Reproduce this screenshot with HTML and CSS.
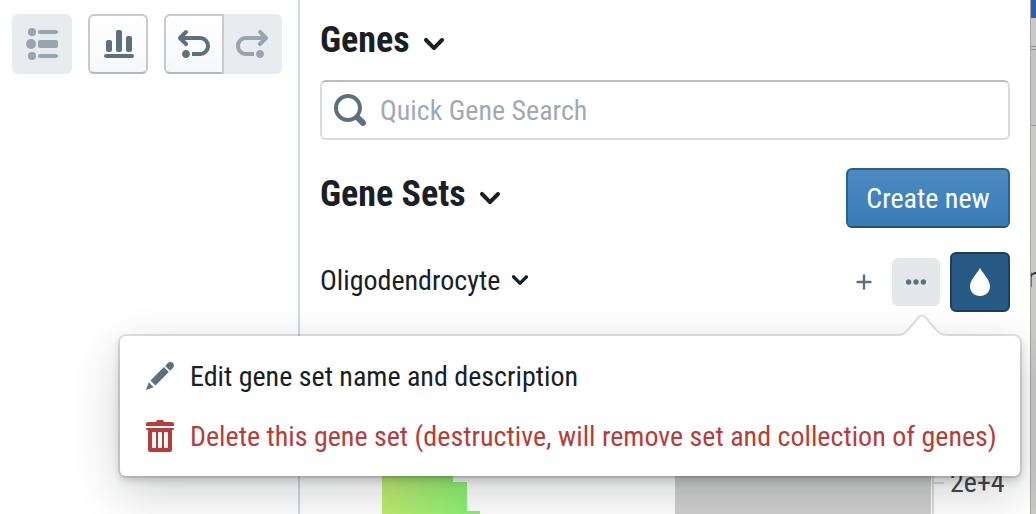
FILE: index.html
```html
<!DOCTYPE html>
<html lang="en">
<head>
<meta charset="utf-8">
<title>Gene Sets</title>
<link rel="stylesheet" href="styles.css">
</head>
<body>
<div class="app">
  <div class="toolbar">
    <button class="tool tool-disabled" aria-label="Legend" disabled>
      <svg class="icon" viewBox="0 0 16 16"><circle cx="3" cy="2" r="2"/><circle cx="2.5" cy="8" r="2.5"/><circle cx="3" cy="14" r="2"/><rect x="6" y="1" width="10" height="2" rx="1"/><rect x="6" y="6" width="10" height="4" rx="1"/><rect x="6" y="13" width="10" height="2" rx="1"/></svg>
    </button>
    <button class="tool" aria-label="Chart">
      <svg class="icon" viewBox="0 0 16 16"><rect x="2" y="6" width="3" height="6" rx="1"/><rect x="7" y="1" width="3" height="11" rx="1"/><rect x="12" y="4" width="3" height="8" rx="1"/><rect x="1" y="13" width="15" height="2" rx="1"/></svg>
    </button>
    <div class="tool-group">
      <button class="tool tool-first" aria-label="Undo">
        <svg class="icon" viewBox="0 0 16 16"><path d="M4 11c-1.1 0-2 .9-2 2s.9 2 2 2 2-.9 2-2-.9-2-2-2zm7-7H3.41L4.7 2.71c.19-.18.3-.43.3-.71a1.003 1.003 0 00-1.71-.71l-3 3C.11 4.47 0 4.72 0 5c0 .28.11.53.29.71l3 3a1.003 1.003 0 001.42-1.42L3.41 6H11c1.66 0 3 1.34 3 3s-1.34 3-3 3H7v2h4c2.76 0 5-2.24 5-5s-2.24-5-5-5z"/></svg>
      </button>
      <button class="tool tool-disabled tool-last" aria-label="Redo" disabled>
        <svg class="icon" viewBox="0 0 16 16"><path transform="matrix(-1 0 0 1 16 0)" d="M4 11c-1.1 0-2 .9-2 2s.9 2 2 2 2-.9 2-2-.9-2-2-2zm7-7H3.41L4.7 2.71c.19-.18.3-.43.3-.71a1.003 1.003 0 00-1.71-.71l-3 3C.11 4.47 0 4.72 0 5c0 .28.11.53.29.71l3 3a1.003 1.003 0 001.42-1.42L3.41 6H11c1.66 0 3 1.34 3 3s-1.34 3-3 3H7v2h4c2.76 0 5-2.24 5-5s-2.24-5-5-5z"/></svg>
      </button>
    </div>
  </div>

  <main class="panel">
    <h2 class="heading">
      <button class="toggle">Genes <svg class="icon" viewBox="0 0 16 16"><path d="M12 5c-.28 0-.53.11-.71.29L8 8.59l-3.29-3.3a1.003 1.003 0 00-1.42 1.42l4 4c.18.18.43.29.71.29s.53-.11.71-.29l4-4A1.003 1.003 0 0012 5z"/></svg></button>
    </h2>
    <label class="search">
      <svg class="icon" viewBox="0 0 16 16"><path d="M15.55 13.43l-2.67-2.68a6.94 6.94 0 001.11-3.76c0-3.87-3.13-7-7-7s-7 3.13-7 7 3.13 7 7 7c1.39 0 2.68-.42 3.76-1.11l2.68 2.67a1.498 1.498 0 102.12-2.12zm-8.56-1.44c-2.76 0-5-2.24-5-5s2.24-5 5-5 5 2.24 5 5-2.24 5-5 5z"/></svg>
      <input class="search-input" type="text" placeholder="Quick Gene Search" aria-label="Quick Gene Search">
    </label>

    <div class="row sets-row">
      <h2 class="heading">
        <button class="toggle">Gene Sets <svg class="icon" viewBox="0 0 16 16"><path d="M12 5c-.28 0-.53.11-.71.29L8 8.59l-3.29-3.3a1.003 1.003 0 00-1.42 1.42l4 4c.18.18.43.29.71.29s.53-.11.71-.29l4-4A1.003 1.003 0 0012 5z"/></svg></button>
      </h2>
      <button class="create">Create new</button>
    </div>

    <div class="row set-row">
      <button class="toggle set-name">Oligodendrocyte <svg class="icon icon-mid" viewBox="0 0 16 16"><path d="M12 5c-.28 0-.53.11-.71.29L8 8.59l-3.29-3.3a1.003 1.003 0 00-1.42 1.42l4 4c.18.18.43.29.71.29s.53-.11.71-.29l4-4A1.003 1.003 0 0012 5z"/></svg></button>
      <div class="actions">
        <button class="mini" aria-label="Add genes">
          <svg class="icon icon-small" viewBox="0 0 24 24"><path d="M12 5.500v13M5.500 12h13" fill="none" stroke="currentColor" stroke-width="2.400" stroke-linecap="round"/></svg>
        </button>
        <div class="menu-anchor">
          <button class="mini mini-active" aria-label="More actions" aria-expanded="true">
            <svg class="icon icon-small" viewBox="0 0 24 24"><circle cx="4.600" cy="12" r="2.700"/><circle cx="12" cy="12" r="2.700"/><circle cx="19.400" cy="12" r="2.700"/></svg>
          </button>
          <div class="popover">
            <svg class="popover-arrow" viewBox="0 0 52 24"><path class="arrow-fill" d="M0 24V22C9 22 10 18 13 15L22 4Q26 0 30 4L39 15C42 18 43 22 52 22V24z"/><path class="arrow-line" d="M0 22C8 22 10 19 13 15.500L22.500 4.500Q26 .500 29.500 4.500L39 15.500C42 19 44 22 52 22"/></svg>
            <button class="menu-item">
              <svg class="icon" viewBox="0 0 16 16"><path d="M3.250 10.260l2.470 2.470 6.690-6.690-2.460-2.480-6.700 6.700zM.990 14.990l3.860-1.390-2.460-2.440L.990 15zm12.250-14c-.48 0-.92.2-1.240.51l-1.440 1.440 2.470 2.470 1.440-1.440c.32-.32.51-.75.51-1.240.01-.95-.77-1.740-1.740-1.740z"/></svg>
              <span class="menu-text">Edit gene set name and description</span>
            </button>
            <button class="menu-item menu-danger">
              <svg class="icon" viewBox="0 0 16 16"><path fill-rule="evenodd" d="M1.500 4h13a.5.5 0 010 1H14v10a1 1 0 01-1 1H3a1 1 0 01-1-1V5h-.5a.5.5 0 010-1zM4 6.500v7q0 .5 .5 .5H5.500q.5 0 .5-.5v-7q0-.5-.5-.5H4.500q-.5 0-.5 .5zM7 6.500v7q0 .5 .5 .5H8.500q.5 0 .5-.5v-7q0-.5-.5-.5H7.500q-.5 0-.5 .5zM10 6.500v7q0 .5 .5 .5H11.500q.5 0 .5-.5v-7q0-.5-.5-.5H10.500q-.5 0-.5 .5zM14 1h-4q0-1-1-1H7Q6 0 6 1H2Q1 1 1 2v1h14V2q0-1-1-1z"/></svg>
              <span class="menu-text">Delete this gene set (destructive, will remove set and collection of genes)</span>
            </button>
          </div>
        </div>
        <button class="color-by" aria-label="Color by gene set">
          <svg class="icon" viewBox="0 0 32 32"><path d="M16 2c-2.500 5-10 12-10 18.500C6 26 10.500 30 16 30s10-4 10-9.500C26 14 18.500 7 16 2z"/></svg>
        </button>
      </div>
    </div>

    <div class="chart">
      <svg class="histogram" viewBox="0 0 98 54">
        <defs><linearGradient id="ramp"><stop offset="0" stop-color="#c0ec70"/><stop offset="1" stop-color="#85f274"/></linearGradient></defs>
        <path fill="url(#ramp)" d="M0 0H71V22H85V51H98V54H0z"/>
      </svg>
      <div class="brush"></div>
      <div class="axis"><span class="tick"></span><span class="tick-label">2e+4</span></div>
    </div>
  </main>

  <div class="backdrop"><div class="backdrop-top"></div><div class="backdrop-tab"></div><div class="backdrop-bar"></div><div class="backdrop-body">n</div></div>
</div>
</body>
</html>
```
FILE: styles.css
```css
* { box-sizing: border-box; }
body { margin: 0; font-family: "Roboto Condensed", "Liberation Sans Narrow", Roboto, sans-serif; font-size: 28px; line-height: 36px; color: #182026; background: #fff; }
button { font: inherit; color: inherit; background: none; border: 0; padding: 0; margin: 0; }
.app { display: flex; height: 100vh; overflow: hidden; }
.icon { display: block; flex: none; width: 32px; height: 32px; fill: currentColor; }
.icon-mid { width: 26px; height: 26px; }
.icon-small { width: 24px; height: 24px; }

.toolbar { display: flex; align-items: flex-start; gap: 16px; flex: none; width: 300px; padding: 14px 0 0 12px; border-right: 2px solid #ced9e0; }
.tool-group { display: flex; }
.tool { display: flex; align-items: center; justify-content: center; width: 60px; height: 60px; border: 2px solid #c9cacb; border-bottom-color: #b5b7b9; border-radius: 6px; color: #5c7080; background: linear-gradient(#fff, #f5f8fa); }
.tool-disabled { border: 0; color: #98a4af; background: #e7ecee; }
.tool-first { border-radius: 6px 0 0 6px; }
.tool-last { width: 58px; padding-right: 2px; border-radius: 0 6px 6px 0; }

.panel { flex: 1; min-width: 0; display: flex; flex-direction: column; padding: 20px 20px 0; }
.heading { margin: 0; font-size: 36px; line-height: 40px; font-weight: 700; }
.toggle { display: flex; align-items: center; gap: 8px; white-space: nowrap; }
.heading .icon { margin-top: 8px; }
.search { display: flex; align-items: center; gap: 14px; height: 60px; margin-top: 20px; padding: 0 12px; border: 2px solid #dadcdd; border-top-color: #b9bbbc; border-radius: 6px; color: #5c7080; }
.search-input { flex: 1; min-width: 0; border: 0; outline: 0; padding: 2px 0 0; background: none; font: inherit; color: #182026; }
.search-input::placeholder { color: #a0aab4; opacity: 1; }
.row { display: flex; justify-content: space-between; }
.sets-row { margin-top: 28px; }
.sets-row .heading { margin-top: 6px; }
.create { min-width: 164px; height: 60px; padding: 2px 18px 0; border: 2px solid #2c5f8d; border-bottom-color: #284f74; border-radius: 6px; color: #fff; background: linear-gradient(#4c8abf, #3a7bb9); white-space: nowrap; }
.set-row { margin-top: 24px; align-items: center; }
.set-name { padding-bottom: 2px; gap: 7px; }
.set-name .icon { margin-bottom: 2px; }
.actions { display: flex; align-items: center; gap: 4px; }
.mini { display: flex; align-items: center; justify-content: center; width: 48px; height: 48px; border-radius: 6px; color: #5c7080; }
.mini-active { background: #e4e8eb; }
.color-by { display: flex; align-items: center; justify-content: center; width: 60px; height: 60px; margin-left: 6px; border: 2px solid #1d3f5f; border-radius: 6px; color: #fff; background: #285a86; }

.menu-anchor { position: relative; }
.popover { position: absolute; z-index: 2; top: 78px; right: -80px; padding: 10px; width: 900px; border-radius: 6px; background: #fff; box-shadow: 0 0 0 2px rgba(16, 22, 26, .1), 0 4px 8px rgba(16, 22, 26, .2), 0 16px 48px rgba(16, 22, 26, .2); }
.popover-arrow { position: absolute; top: -23px; right: 72px; width: 52px; height: 24px; }
.arrow-fill { fill: #fff; }
.arrow-line { fill: none; stroke: #dadbdc; stroke-width: 2; }
.menu-item { display: flex; align-items: center; gap: 14px; width: 100%; height: 60px; padding: 0 14px; white-space: nowrap; text-align: left; }
.menu-text { padding-top: 2px; }
.menu-item .icon { color: #5c7080; }
.menu-danger, .menu-danger .icon { color: #b83c37; }

.chart { display: flex; flex: 1; min-height: 0; margin-top: 148px; padding-left: 62px; overflow: hidden; }
.histogram { flex: none; width: 98px; height: 54px; }
.brush { flex: 1; margin-left: 195px; background: #cfcfcf; }
.axis { display: flex; align-items: flex-start; width: 78px; margin-left: 1px; border-left: 2px solid #dcdcdc; color: #444; }
.tick { width: 10px; height: 2px; margin: 22px 6px 0 0; background: #dcdcdc; }
.tick-label { margin-top: 5px; }

.backdrop { display: flex; flex-direction: column; flex: none; width: 6px; overflow: hidden; border-left: 1px solid #a5a5a5; background: #c9c9c8; font-family: "Liberation Sans", sans-serif; }
.backdrop-top { height: 18px; background: #2a5cb8; }
.backdrop-tab { height: 32px; border-bottom: 4px double #929295; }
.backdrop-bar { height: 76px; border-bottom: 1px solid #969698; background: #c4c4c4; }
.backdrop-body { margin-left: -4px; padding-top: 134px; color: #222; }
```
